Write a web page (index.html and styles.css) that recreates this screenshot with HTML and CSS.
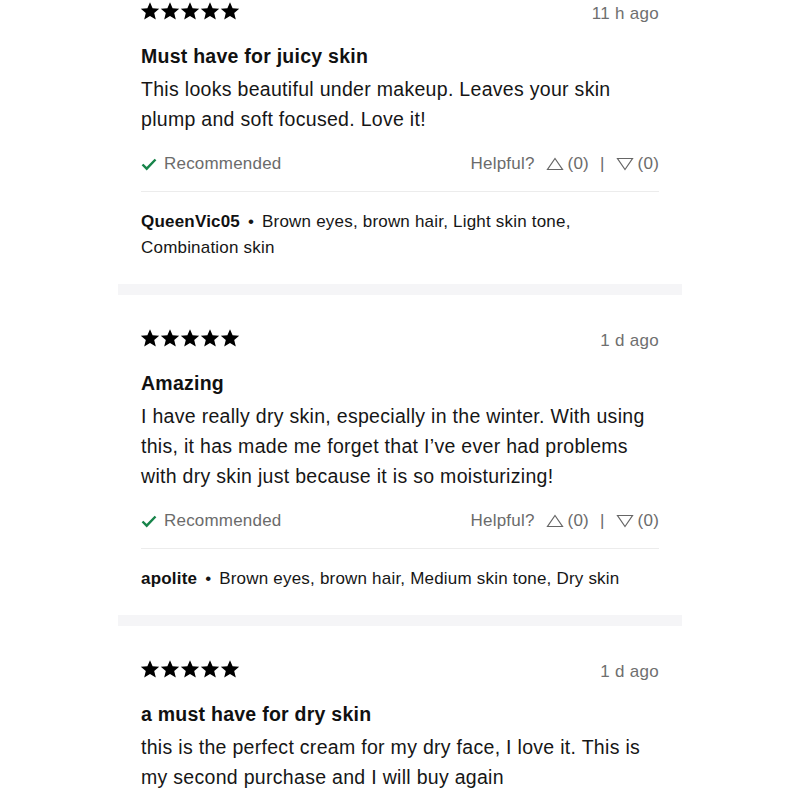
FILE: index.html
```html
<!DOCTYPE html>
<html lang="en">
<head>
<meta charset="utf-8">
<title>Reviews</title>
<link rel="stylesheet" href="styles.css">
</head>
<body>
<div class="feed">
  <article class="review">
    <div class="head">
      <div class="stars">
        <svg viewBox="0 0 100 20" width="100" height="20"><g fill="#000"><path id="s" d="M10 1.2l2.6 6.1 6.6.5-5 4.3 1.6 6.5L10 15.1l-5.8 3.5 1.6-6.5-5-4.3 6.6-.5z"/><use href="#s" x="20"/><use href="#s" x="40"/><use href="#s" x="60"/><use href="#s" x="80"/></g></svg>
      </div>
      <span class="date">11 h ago</span>
    </div>
    <h3 class="title">Must have for juicy skin</h3>
    <p class="body">This looks beautiful under makeup. Leaves your skin plump and soft focused. Love it!</p>
    <div class="meta">
      <span class="rec"><svg class="check" viewBox="0 0 16 14" width="16" height="14"><path d="M1.5 7.5l4.2 4.2L14.5 2.5" fill="none" stroke="#17844a" stroke-width="2.4"/></svg>Recommended</span>
      <span class="helpful">Helpful?<svg class="tri" viewBox="0 0 18 14" width="18" height="14"><path d="M9 1.5L16.5 12.5H1.5z" fill="none" stroke="#666" stroke-width="1.2"/></svg>(0)<span class="bar">|</span><svg class="tri" viewBox="0 0 18 14" width="18" height="14"><path d="M9 12.5L16.5 1.5H1.5z" fill="none" stroke="#666" stroke-width="1.2"/></svg>(0)</span>
    </div>
    <hr class="divider">
    <p class="user"><b class="name">QueenVic05</b> <span class="dot">•</span> <span class="traits">Brown eyes, brown hair, Light skin tone, Combination skin</span></p>
  </article>
  <div class="band"></div>
  <article class="review">
    <div class="head">
      <div class="stars">
        <svg viewBox="0 0 100 20" width="100" height="20"><g fill="#000"><use href="#s"/><use href="#s" x="20"/><use href="#s" x="40"/><use href="#s" x="60"/><use href="#s" x="80"/></g></svg>
      </div>
      <span class="date">1 d ago</span>
    </div>
    <h3 class="title">Amazing</h3>
    <p class="body">I have really dry skin, especially in the winter. With using this, it has made me forget that I’ve ever had problems with dry skin just because it is so moisturizing!</p>
    <div class="meta">
      <span class="rec"><svg class="check" viewBox="0 0 16 14" width="16" height="14"><path d="M1.5 7.5l4.2 4.2L14.5 2.5" fill="none" stroke="#17844a" stroke-width="2.4"/></svg>Recommended</span>
      <span class="helpful">Helpful?<svg class="tri" viewBox="0 0 18 14" width="18" height="14"><path d="M9 1.5L16.5 12.5H1.5z" fill="none" stroke="#666" stroke-width="1.2"/></svg>(0)<span class="bar">|</span><svg class="tri" viewBox="0 0 18 14" width="18" height="14"><path d="M9 12.5L16.5 1.5H1.5z" fill="none" stroke="#666" stroke-width="1.2"/></svg>(0)</span>
    </div>
    <hr class="divider">
    <p class="user"><b class="name">apolite</b> <span class="dot">•</span> <span class="traits">Brown eyes, brown hair, Medium skin tone, Dry skin</span></p>
  </article>
  <div class="band"></div>
  <article class="review">
    <div class="head">
      <div class="stars">
        <svg viewBox="0 0 100 20" width="100" height="20"><g fill="#000"><use href="#s"/><use href="#s" x="20"/><use href="#s" x="40"/><use href="#s" x="60"/><use href="#s" x="80"/></g></svg>
      </div>
      <span class="date">1 d ago</span>
    </div>
    <h3 class="title">a must have for dry skin</h3>
    <p class="body">this is the perfect cream for my dry face, I love it. This is my second purchase and I will buy again</p>
  </article>
</div>
</body>
</html>
```
FILE: styles.css
```css
* { box-sizing: border-box; }
html, body { margin: 0; padding: 0; background: #fff; }
body {
  font-family: "Liberation Sans", Arial, sans-serif;
  color: #111;
  overflow: hidden;
}
.feed {
  width: 564px;
  margin: 0 auto;
}
.review {
  padding: 32px 23px 23px;
}
.review:first-child { padding-top: 0; }
.head {
  display: flex;
  justify-content: space-between;
  align-items: center;
  height: 22px;
}
.stars svg { display: block; }
.stars { margin-left: -1px; }
.date {
  padding-top: 5px;
  font-size: 17px;
  letter-spacing: 0.3px;
  color: #6f6f6f;
}
.title {
  margin: 21px 0 0;
  font-size: 19.5px;
  line-height: 26px;
  font-weight: bold;
  letter-spacing: 0.25px;
  color: #111;
}
.body {
  margin: 5px 0 0;
  font-size: 19.5px;
  line-height: 30px;
  letter-spacing: 0.3px;
  color: #161616;
}
.meta {
  margin-top: 18px;
  display: flex;
  justify-content: space-between;
  align-items: center;
  height: 24px;
  font-size: 17px;
  letter-spacing: 0.2px;
  color: #6b6b6b;
}
.rec, .helpful {
  display: flex;
  align-items: center;
}
.check { margin-right: 7px; }
.tri { margin: 0 4px 0 11px; }
.bar { margin-left: 11px; }
.divider {
  margin: 15px 0 0;
  border: 0;
  border-top: 1px solid #ececec;
  height: 0;
}
.user {
  margin: 17px 0 0;
  font-size: 17px;
  letter-spacing: 0.2px;
  line-height: 26px;
  color: #161616;
  word-spacing: 0;
}
.name { color: #111; }
.dot { margin: 0 3px; }
.band {
  height: 11px;
  background: #f5f5f7;
}
```
